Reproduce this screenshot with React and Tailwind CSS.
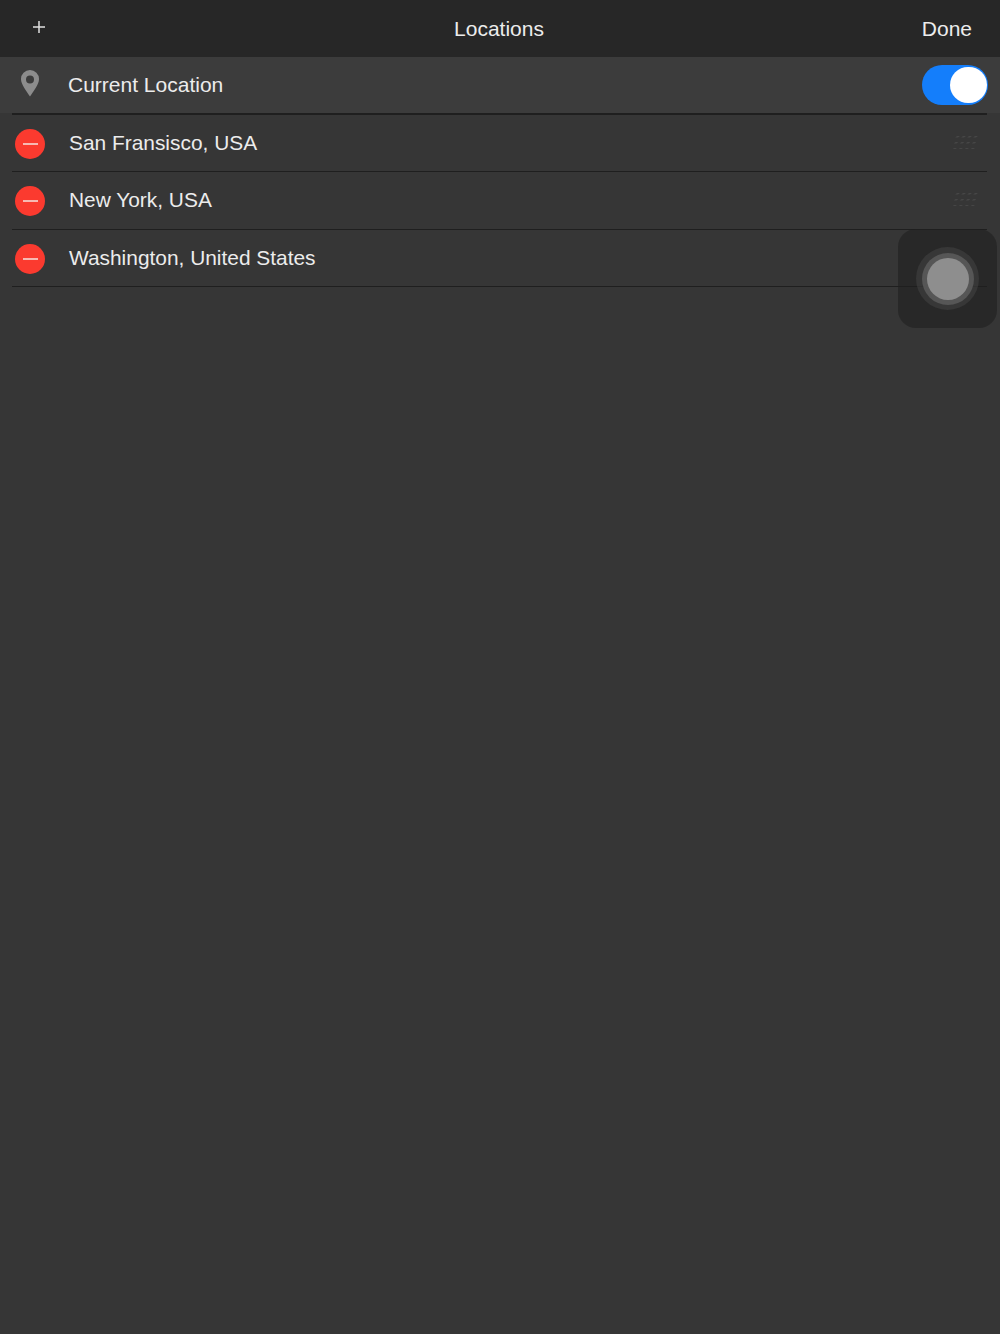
function Grip() {
  const rows = [0, 6, 12];
  const cols = [0, 6, 12, 18];
  return (
    <svg width="28" height="14" viewBox="0 0 28 14" className="ml-auto mr-[6px] mb-[4px] opacity-70">
      {rows.map((y) =>
        cols.map((x) => (
          <path key={`${x}-${y}`} d={`M${x + 4 - y / 4} ${y + 1}l-2 1.500h3l2-1.500z`} fill="#4e4e4e" />
        ))
      )}
    </svg>
  );
}

export default function App() {
  const rows = ["San Fransisco, USA", "New York, USA", "Washington, United States"];
  return (
    <div className="relative h-[1334px] w-[1000px] overflow-hidden bg-[#363636] text-[#ececec] [font-family:'Liberation_Sans',Arial,sans-serif]">
      <header className="grid h-[57px] grid-cols-3 items-center bg-[#272727] pl-[32px] pr-[28px]">
        <svg width="14" height="14" viewBox="0 0 14 14" className="mb-[3px]">
          <path d="M7 1v12M1 7h12" stroke="#e0e0e0" strokeWidth="1.5" />
        </svg>
        <span className="justify-self-center pr-[6px] text-[21px] leading-none">Locations</span>
        <span className="justify-self-end text-[21px] leading-none">Done</span>
      </header>
      <div className="flex h-[56px] items-center justify-between bg-[#3c3c3c] pl-[21px] pr-[12px]">
        <div className="flex items-center">
          <svg width="18" height="27" viewBox="0 0 18 27" className="mb-[3px]">
            <path fillRule="evenodd" d="M9 0a9 9 0 0 1 9 9.200c0 4.800-5.500 12-9 17.300C5.500 21.200 0 14 0 9.200A9 9 0 0 1 9 0Zm0 5.500a4 4 0 1 0 0 8 4 4 0 0 0 0-8Z" fill="#8c8c8c" />
          </svg>
          <span className="mb-[2px] ml-[29px] text-[21px] leading-none">Current Location</span>
        </div>
        <div className="flex h-[40px] w-[66px] items-center justify-end rounded-full bg-[#147efb] pr-[1.500px]">
          <div className="h-[36px] w-[37px] rounded-full bg-white" />
        </div>
      </div>
      <div className="ml-[12px] mr-[13px]">
        <div className="h-[1.500px] bg-[#1f1f1f]" />
        {rows.map((r, i) => (
          <div key={r} className="flex h-[57.500px] items-center border-b-[1.500px] border-[#1f1f1f] pt-[2px]">
            <div className="ml-[3px] flex h-[30px] w-[30px] items-center justify-center rounded-full bg-[#fb3a2f]">
              <div className="h-[2px] w-[15px] bg-[#f7b9b3]" />
            </div>
            <span className="mb-[1px] ml-[24px] text-[20.900px] leading-none">{r}</span>
            {i < 2 && <Grip />}
          </div>
        ))}
      </div>
      <div className="absolute left-[898px] top-[229px] flex h-[99px] w-[99px] items-center justify-center rounded-[18px] bg-[#202020]/60">
        <div className="flex h-[63px] w-[63px] items-center justify-center rounded-full bg-[#454545]/50">
          <div className="flex h-[52px] w-[52px] items-center justify-center rounded-full bg-[#565656]">
            <div className="h-[42px] w-[42px] rounded-full bg-[#8e8e8e]" />
          </div>
        </div>
      </div>
    </div>
  );
}
